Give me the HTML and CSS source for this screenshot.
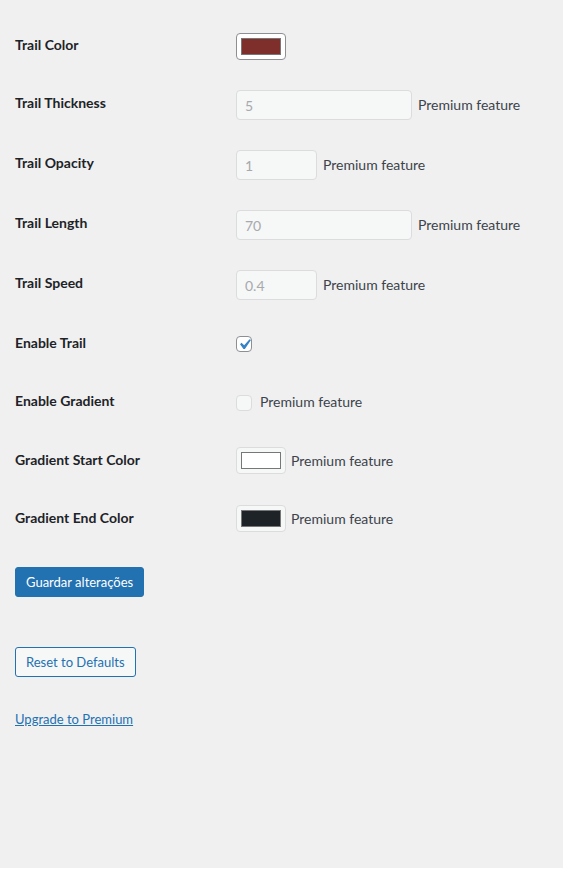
FILE: index.html
```html
<!DOCTYPE html>
<html lang="pt">
<head>
<meta charset="utf-8">
<title>Trail Settings</title>
<link rel="stylesheet" href="styles.css">
</head>
<body>
<div class="page">
  <form class="settings">
    <div class="row">
      <div class="label">Trail Color</div>
      <div class="control">
        <span class="color"><span class="swatch swatch-red"></span></span>
      </div>
    </div>
    <div class="row row-input">
      <div class="label">Trail Thickness</div>
      <div class="control">
        <input class="field field-wide" type="text" value="5" disabled>
        <span class="note note-input">Premium feature</span>
      </div>
    </div>
    <div class="row row-input">
      <div class="label">Trail Opacity</div>
      <div class="control">
        <input class="field field-small" type="text" value="1" disabled>
        <span class="note note-input">Premium feature</span>
      </div>
    </div>
    <div class="row row-input">
      <div class="label">Trail Length</div>
      <div class="control">
        <input class="field field-wide" type="text" value="70" disabled>
        <span class="note note-input">Premium feature</span>
      </div>
    </div>
    <div class="row row-input">
      <div class="label">Trail Speed</div>
      <div class="control">
        <input class="field field-small" type="text" value="0.4" disabled>
        <span class="note note-input">Premium feature</span>
      </div>
    </div>
    <div class="row">
      <div class="label">Enable Trail</div>
      <div class="control">
        <span class="check">
          <svg class="tick" viewBox="0 0 20 20" width="21" height="21"><path d="M14.83 4.89l1.34.94-5.81 8.38H9.02L5.78 9.670l1.34-1.25 2.57 2.4z" fill="#3582c4"/></svg>
        </span>
      </div>
    </div>
    <div class="row">
      <div class="label">Enable Gradient</div>
      <div class="control">
        <span class="check check-disabled"></span>
        <span class="note note-check">Premium feature</span>
      </div>
    </div>
    <div class="row">
      <div class="label">Gradient Start Color</div>
      <div class="control">
        <span class="color color-disabled"><span class="swatch swatch-white"></span></span>
        <span class="note note-color">Premium feature</span>
      </div>
    </div>
    <div class="row">
      <div class="label">Gradient End Color</div>
      <div class="control">
        <span class="color color-disabled"><span class="swatch swatch-dark"></span></span>
        <span class="note note-color">Premium feature</span>
      </div>
    </div>
    <div class="submit">
      <button type="button" class="button button-primary">Guardar alterações</button>
    </div>
  </form>
  <div class="reset">
    <button type="button" class="button button-secondary">Reset to Defaults</button>
  </div>
  <p class="upgrade"><a href="#">Upgrade to Premium</a></p>
</div>
</body>
</html>
```
FILE: styles.css
```css
html, body {
  margin: 0;
  padding: 0;
  background: #ffffff;
}

body {
  font-family: Lato, "Liberation Sans", sans-serif;
  font-size: 14px;
  color: #3c434a;
}

.page {
  width: 563px;
  height: 868px;
  background: #f0f0f1;
  box-sizing: border-box;
  padding: 17px 0 0 15px;
}

.settings {
  margin: 0;
}

.row {
  display: grid;
  grid-template-columns: 221px 1fr;
  align-items: stretch;
}

.label {
  padding: 19px 0 21px;
  line-height: 18.2px;
  font-weight: 700;
  color: #1d2327;
}

.control {
  display: flex;
  align-items: center;
  padding: 15px 0;
}

.field {
  box-sizing: border-box;
  height: 30px;
  margin: 0;
  padding: 0 8px;
  border: 1px solid #dcdcde;
  border-radius: 4px;
  background: #f6f7f7;
  color: #a7aaad;
  font-family: inherit;
  font-size: 14px;
  box-shadow: none;
}

.field-wide {
  width: 176px;
}

.field-small {
  width: 81px;
}

.note {
  color: #3c434a;
  line-height: 18px;
}

.note-input {
  margin-left: 6px;
}

.note-color {
  margin-left: 5px;
}

.note-check {
  margin-left: 8px;
  margin-top: -1px;
}

.color {
  box-sizing: border-box;
  display: block;
  width: 50px;
  height: 27px;
  padding: 4px;
  border: 1px solid #8c8f94;
  border-radius: 4px;
  background: #ffffff;
}

.color-disabled {
  border-color: #dcdcde;
  background: #f6f7f7;
}

.swatch {
  display: block;
  box-sizing: border-box;
  width: 40px;
  height: 17px;
  border: 1px solid #777777;
}

.swatch-red {
  background: #7e2f2c;
}

.swatch-white {
  background: #ffffff;
}

.swatch-dark {
  background: #1d2327;
}

.check {
  position: relative;
  box-sizing: border-box;
  display: block;
  width: 16px;
  height: 16px;
  border: 1px solid #8c8f94;
  border-radius: 4px;
  background: #ffffff;
}

.check-disabled {
  border-color: #dcdcde;
  background: #f6f7f7;
}

.tick {
  position: absolute;
  left: -3px;
  top: -3px;
}

.submit {
  margin-top: 19px;
}

.button {
  box-sizing: border-box;
  display: inline-block;
  height: 30px;
  margin: 0;
  padding: 0 10px;
  border-radius: 3px;
  font-family: inherit;
  font-size: 13px;
  line-height: 28px;
  cursor: pointer;
}

.button-primary {
  background: #2271b1;
  border: 1px solid #2271b1;
  color: #ffffff;
}

.button-secondary {
  background: #f6f7f7;
  border: 1px solid #2271b1;
  color: #2271b1;
}

.reset {
  margin-top: 50px;
}

.upgrade {
  margin: 32px 0 0;
  font-size: 13px;
  line-height: 20px;
}

.upgrade a {
  color: #2271b1;
  text-decoration: underline;
}
```
